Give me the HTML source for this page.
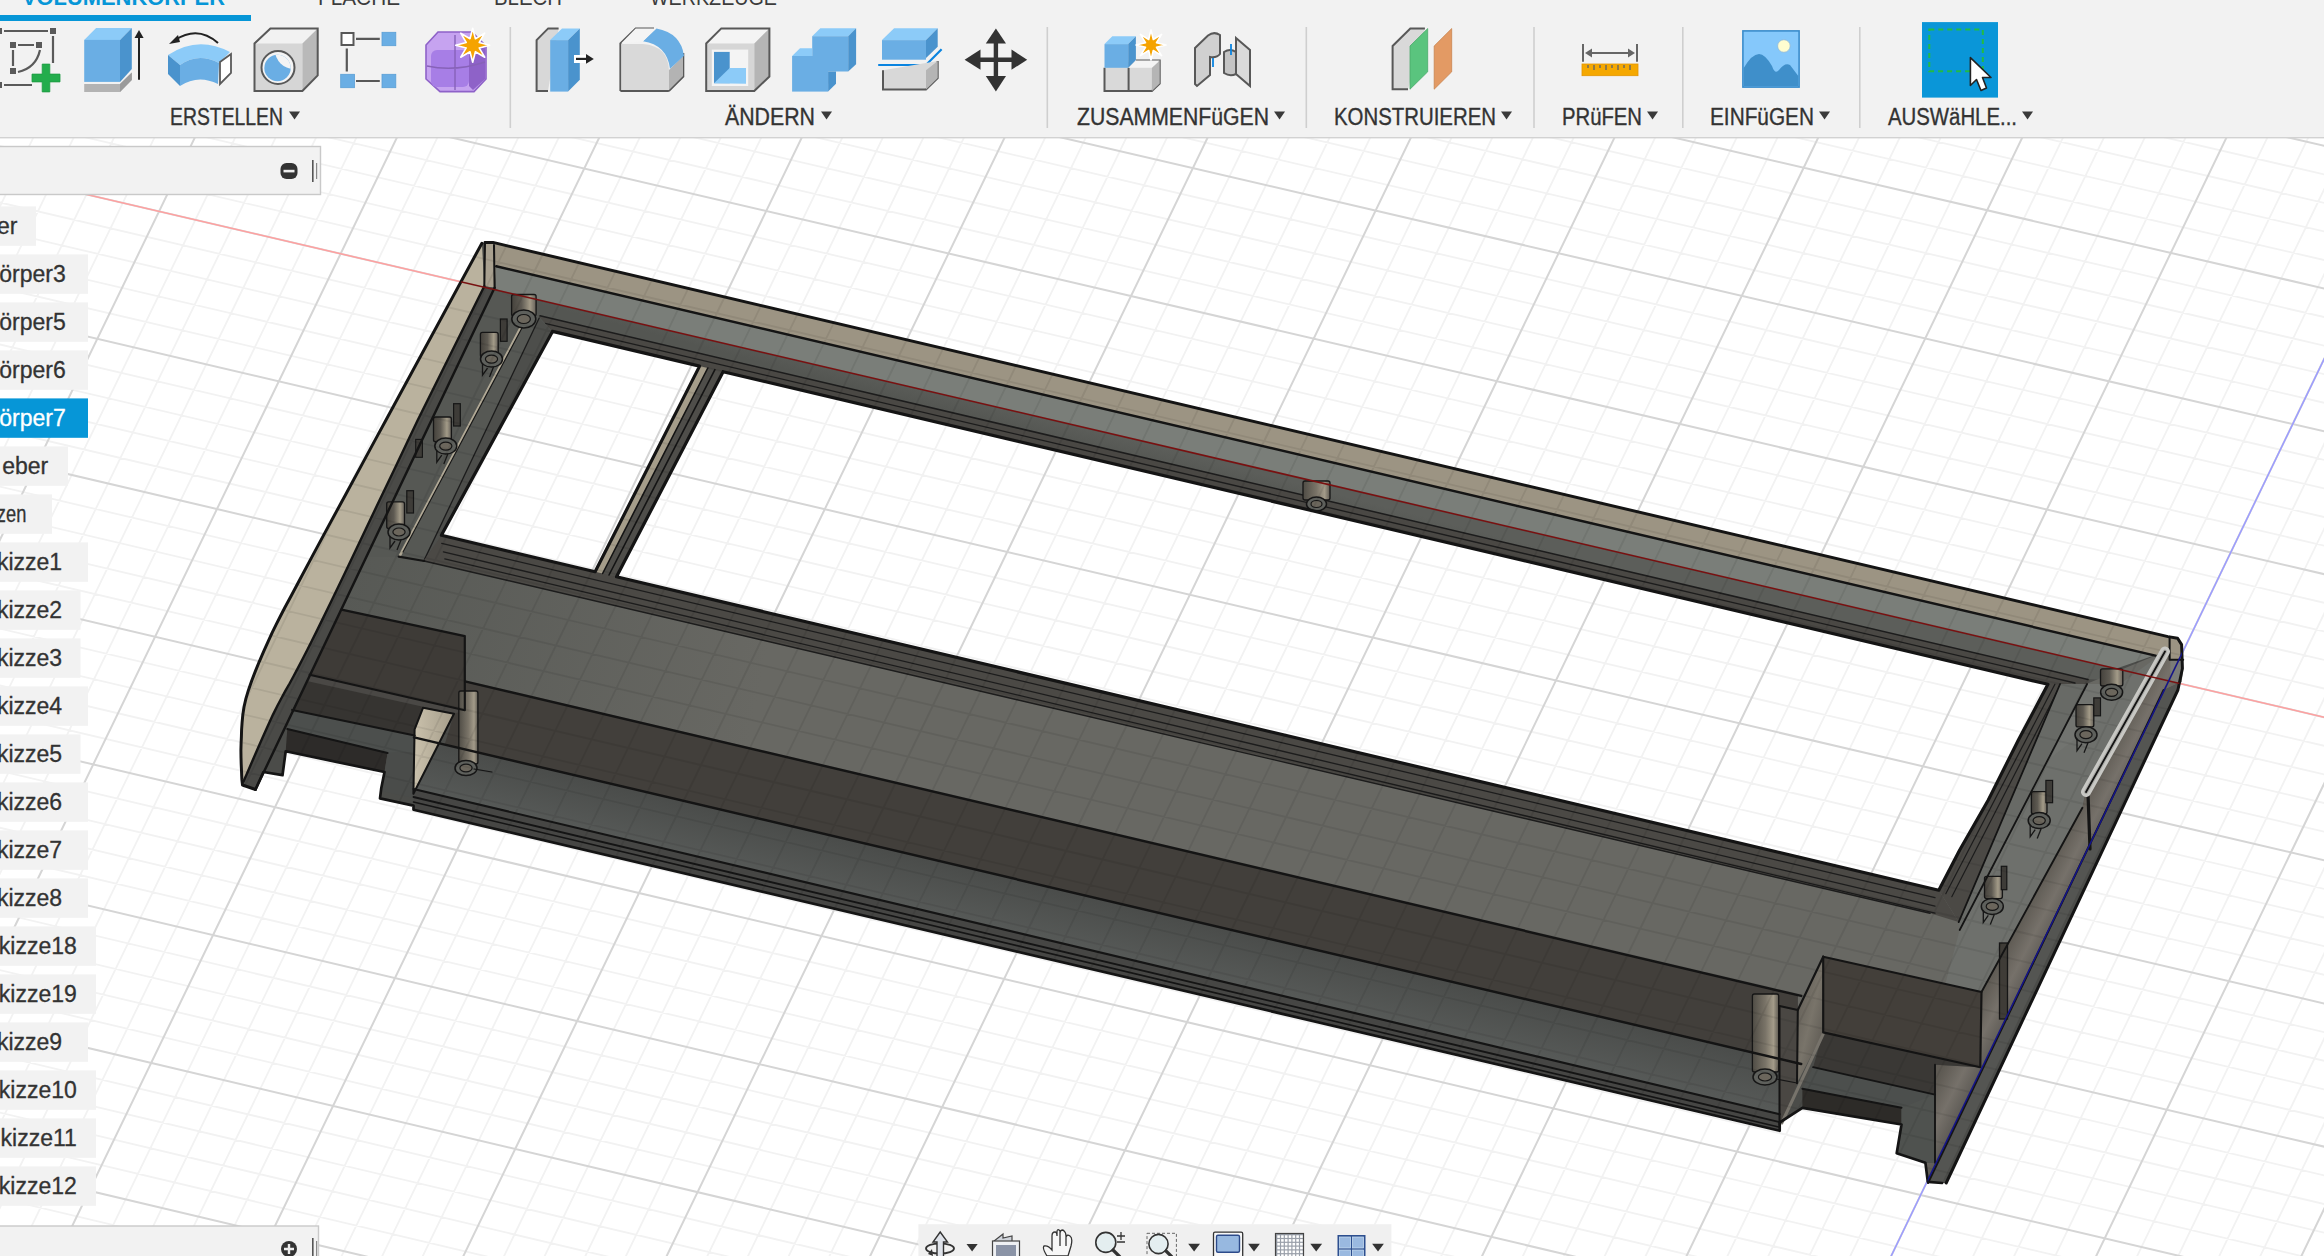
<!DOCTYPE html>
<html><head><meta charset="utf-8"><style>
html,body{margin:0;padding:0;width:2324px;height:1256px;overflow:hidden;background:#fff;font-family:"Liberation Sans",sans-serif;}
#vp{position:absolute;left:0;top:0;width:2324px;height:1256px;}
.abs{position:absolute;}
</style></head><body>
<svg id="vp" width="2324" height="1256" viewBox="0 0 2324 1256">
<defs>
<clipPath id="vpclip"><rect x="0" y="138" width="2324" height="1118"/></clipPath>

<linearGradient id="gCyl" x1="0" y1="0" x2="1" y2="0"><stop offset="0" stop-color="#45423c"/><stop offset="0.4" stop-color="#5e5a52"/><stop offset="0.75" stop-color="#a39b88"/><stop offset="1" stop-color="#66615a"/></linearGradient>
<linearGradient id="gCyl2" x1="0" y1="0" x2="1" y2="0"><stop offset="0" stop-color="#4f4c45"/><stop offset="0.5" stop-color="#7a7468"/><stop offset="0.8" stop-color="#a39b89"/><stop offset="1" stop-color="#5e5a52"/></linearGradient>
<linearGradient id="gLow" gradientUnits="userSpaceOnUse" x1="1000" y1="875.4" x2="987.6" y2="928.2"><stop offset="0" stop-color="#4a4c4a"/><stop offset="1" stop-color="#575a58"/></linearGradient>
<linearGradient id="gWall" gradientUnits="userSpaceOnUse" x1="1000" y1="405" x2="995" y2="424"><stop offset="0" stop-color="#5c5e5a"/><stop offset="1" stop-color="#545652"/></linearGradient>
<linearGradient id="gFrontL" gradientUnits="userSpaceOnUse" x1="340" y1="600" x2="760" y2="690"><stop offset="0" stop-color="#575955"/><stop offset="1" stop-color="#686863"/></linearGradient>
<linearGradient id="gFront" gradientUnits="userSpaceOnUse" x1="1000" y1="698" x2="975" y2="805"><stop offset="0" stop-color="#6b6b66"/><stop offset="1" stop-color="#676762"/></linearGradient>
<linearGradient id="gBrown" gradientUnits="userSpaceOnUse" x1="2040" y1="880" x2="2075" y2="898"><stop offset="0" stop-color="#5e5a53"/><stop offset="0.5" stop-color="#76716a"/><stop offset="1" stop-color="#5a5752"/></linearGradient>
<linearGradient id="gRwall" gradientUnits="userSpaceOnUse" x1="1790" y1="1000" x2="1830" y2="1010"><stop offset="0" stop-color="#5d5952"/><stop offset="0.6" stop-color="#79746a"/><stop offset="1" stop-color="#615d56"/></linearGradient>
<linearGradient id="gBeigeW" gradientUnits="userSpaceOnUse" x1="415" y1="740" x2="450" y2="740"><stop offset="0" stop-color="#c9c0ab"/><stop offset="1" stop-color="#a8a08d"/></linearGradient>

</defs>
<rect x="0" y="0" width="2324" height="1256" fill="#ffffff"/>
<g clip-path="url(#vpclip)">
<g id="grid"><path d="M-97 -839L-1208.5 1451.6M-60.8 -830.7L-1172.4 1460.2M-24.7 -822.4L-1136.4 1468.8M11.5 -814.1L-1100.3 1477.4M83.8 -797.4L-1028 1494.7M120 -789.1L-991.9 1503.3M156.2 -780.8L-955.8 1512M192.4 -772.4L-919.7 1520.6M264.9 -755.8L-847.3 1537.9M301.1 -747.4L-811.2 1546.6M337.4 -739.1L-775 1555.2M373.6 -730.7L-738.8 1563.9M446.1 -714L-666.4 1581.2M482.4 -705.7L-630.2 1589.8M518.7 -697.3L-594 1598.5M555 -689L-557.7 1607.2M627.6 -672.2L-485.3 1624.5M664 -663.9L-449 1633.2M700.3 -655.5L-412.7 1641.8M736.6 -647.2L-376.5 1650.5M809.4 -630.4L-303.9 1667.9M845.7 -622L-267.6 1676.5M882.1 -613.7L-231.3 1685.2M918.5 -605.3L-194.9 1693.9M991.3 -588.5L-122.3 1711.3M1027.7 -580.1L-85.9 1720M1064.2 -571.8L-49.5 1728.7M1100.6 -563.4L-13.2 1737.4M1173.5 -546.6L59.6 1754.8M1209.9 -538.2L96 1763.5M1246.4 -529.8L132.4 1772.2M1282.9 -521.4L168.8 1780.9M1355.9 -504.6L241.7 1798.3M1392.4 -496.2L278.1 1807M1428.9 -487.8L314.6 1815.7M1465.5 -479.4L351 1824.4M1538.5 -462.6L424 1841.9M1575.1 -454.1L460.5 1850.6M1611.7 -445.7L497 1859.3M1648.2 -437.3L533.5 1868.1M1721.4 -420.5L606.5 1885.5M1758 -412L643.1 1894.3M1794.6 -403.6L679.6 1903M1831.2 -395.2L716.2 1911.7M1904.5 -378.3L789.3 1929.2M1941.2 -369.9L825.9 1938M1977.8 -361.4L862.5 1946.7M2014.5 -353L899.1 1955.5M2087.9 -336.1L972.3 1973M2124.5 -327.7L1008.9 1981.7M2161.3 -319.2L1045.6 1990.5M2198 -310.8L1082.2 1999.3M2271.4 -293.9L1155.5 2016.8M2308.2 -285.4L1192.2 2025.6M2344.9 -276.9L1228.9 2034.3M2381.7 -268.5L1265.6 2043.1M2455.2 -251.5L1339 2060.7M2492 -243.1L1375.7 2069.4M2528.8 -234.6L1412.4 2078.2M2565.6 -226.1L1449.2 2087M2639.3 -209.2L1522.7 2104.6M2676.1 -200.7L1559.5 2113.4M2712.9 -192.2L1596.2 2122.2M2749.8 -183.7L1633 2131M2823.5 -166.8L1706.6 2148.6M2860.4 -158.3L1743.4 2157.4M2897.3 -149.8L1780.3 2166.2M2934.2 -141.3L1817.1 2175M3008 -124.3L1890.8 2192.6M3045 -115.8L1927.7 2201.4M3081.9 -107.3L1964.5 2210.2M3118.8 -98.8L2001.4 2219M3192.8 -81.8L2075.2 2236.7M3229.7 -73.2L2112.1 2245.5M3266.7 -64.7L2149 2254.3M3303.7 -56.2L2186 2263.2M3377.7 -39.2L2259.8 2280.8M3414.8 -30.7L2296.8 2289.7M3451.8 -22.1L2333.8 2298.5M3488.8 -13.6L2370.7 2307.3M-145.4 -822L3513.5 20.7M-157.8 -796.6L3501.1 46.4M-170.1 -771.2L3488.7 72.1M-182.4 -745.8L3476.3 97.9M-207.1 -695L3451.5 149.4M-219.4 -669.6L3439.1 175.1M-231.7 -644.2L3426.7 200.9M-244 -618.8L3414.3 226.6M-268.7 -567.9L3389.5 278.1M-281 -542.5L3377.1 303.9M-293.4 -517.1L3364.7 329.6M-305.7 -491.7L3352.3 355.4M-330.4 -440.9L3327.4 406.9M-342.7 -415.5L3315 432.7M-355 -390L3302.6 458.4M-367.4 -364.6L3290.2 484.2M-392 -313.8L3265.4 535.7M-404.4 -288.4L3253 561.5M-416.7 -262.9L3240.6 587.2M-429.1 -237.5L3228.2 613M-453.7 -186.7L3203.3 664.5M-466.1 -161.2L3190.9 690.3M-478.4 -135.8L3178.5 716.1M-490.8 -110.4L3166.1 741.8M-515.4 -59.5L3141.3 793.4M-527.8 -34.1L3128.8 819.2M-540.1 -8.7L3116.4 844.9M-552.5 16.8L3104 870.7M-577.2 67.6L3079.2 922.3M-589.5 93.1L3066.8 948.1M-601.8 118.5L3054.3 973.9M-614.2 144L3041.9 999.6M-638.9 194.8L3017.1 1051.2M-651.2 220.3L3004.7 1077M-663.6 245.7L2992.2 1102.8M-675.9 271.2L2979.8 1128.6M-700.6 322.1L2955 1180.2M-713 347.5L2942.5 1206M-725.3 373L2930.1 1231.7M-737.7 398.4L2917.7 1257.5M-762.4 449.3L2892.8 1309.1M-774.7 474.8L2880.4 1334.9M-787.1 500.2L2868 1360.7M-799.5 525.7L2855.5 1386.5M-824.2 576.6L2830.7 1438.1M-836.5 602.1L2818.3 1464M-848.9 627.5L2805.8 1489.8M-861.2 653L2793.4 1515.6M-886 703.9L2768.5 1567.2M-898.3 729.4L2756.1 1593M-910.7 754.9L2743.7 1618.8M-923 780.3L2731.2 1644.6M-947.8 831.3L2706.4 1696.3M-960.1 856.8L2693.9 1722.1M-972.5 882.2L2681.5 1747.9M-984.8 907.7L2669 1773.7M-1009.6 958.7L2644.2 1825.4M-1021.9 984.1L2631.7 1851.2M-1034.3 1009.6L2619.3 1877M-1046.7 1035.1L2606.8 1902.8M-1071.4 1086.1L2582 1954.5M-1083.8 1111.5L2569.5 1980.3M-1096.1 1137L2557.1 2006.1M-1108.5 1162.5L2544.6 2032M-1133.2 1213.5L2519.8 2083.6M-1145.6 1239L2507.3 2109.5M-1158 1264.5L2494.9 2135.3M-1170.3 1290L2482.4 2161.1M-1195.1 1341L2457.5 2212.8M-1207.5 1366.4L2445.1 2238.7M-1219.8 1391.9L2432.6 2264.5M-1232.2 1417.4L2420.2 2290.3" stroke="#f2f2f2" stroke-width="1.8" fill="none"/>
<path d="M-133.1 -847.4L-1244.6 1442.9M47.7 -805.8L-1064.2 1486.1M228.7 -764.1L-883.5 1529.3M409.9 -722.4L-702.6 1572.5M591.3 -680.6L-521.5 1615.8M773 -638.8L-340.2 1659.2M954.9 -596.9L-158.6 1702.6M1137 -555L23.2 1746.1M1319.4 -513L205.2 1789.6M1502 -471L387.5 1833.2M1684.8 -428.9L570 1876.8M1867.9 -386.7L752.7 1920.5M2051.2 -344.6L935.7 1964.2M2234.7 -302.3L1118.9 2008M2418.4 -260L1302.3 2051.9M2602.4 -217.7L1485.9 2095.8M2786.7 -175.2L1669.8 2139.8M2971.1 -132.8L1854 2183.8M3155.8 -90.3L2038.3 2227.9M3340.7 -47.7L2222.9 2272M3525.9 -5.1L2407.7 2316.2M-133.1 -847.4L3525.9 -5.1M-194.7 -720.4L3463.9 123.6M-256.4 -593.3L3401.9 252.4M-318 -466.3L3339.9 381.1M-379.7 -339.2L3277.8 509.9M-441.4 -212.1L3215.8 638.8M-503.1 -85L3153.7 767.6M-564.8 42.2L3091.6 896.5M-626.5 169.4L3029.5 1025.4M-688.3 296.6L2967.4 1154.4M-750 423.9L2905.3 1283.3M-811.8 551.2L2843.1 1412.3M-873.6 678.5L2781 1541.4M-935.4 805.8L2718.8 1670.4M-997.2 933.2L2656.6 1799.5M-1059 1060.6L2594.4 1928.6M-1120.9 1188L2532.2 2057.8M-1182.7 1315.5L2470 2187M-1244.6 1442.9L2407.7 2316.2" stroke="#d5d5d5" stroke-width="2" fill="none"/></g>
<path d="M-564.8 42.2L3091.6 896.5" stroke="#ffa0a0" stroke-width="1.5" fill="none"/><path d="M2602.4 -217.7L1485.9 2095.8" stroke="#9c9cff" stroke-width="1.5" fill="none"/>
<polygon points="485,242.4 493,242.4 2168,636.6 2177.6,638.2 2181.6,644.6 2182.4,668.5 2177.9,690 1946.2,1183 1942.1,1183 1927.8,1181.8 1925.4,1162.7 1896.7,1153.2 1901.5,1124.5 1802.4,1107.8 1779.7,1122.5 1779.7,1130.8 413.5,809.7 413.5,805.6 380,798.4 381.3,787.9 384.5,772 285.7,751.3 282.5,775.2 263.4,772 255.5,789.5 242.5,785 241.9,779.9 241.7,776 241.5,770.7 241.2,764.4 241,757.4 240.9,750.3 241.1,743.3 241.4,736.5 241.6,729.5 242.1,722.3 242.8,714.8 244,707 245.9,698.7 248.5,689.9 251.7,680.7 255.4,671.1 259.4,661.3 263.7,651.4 268.2,641.4 272.3,632.4 276.1,624.6 280.1,616.7 285,607.3 291.5,595.2 300,579.2 312.2,556.4 327.8,527.4 345,495.7 361.7,464.9 376,438.4 386,420 481.9,243.2" fill="#4b4c49" />
<clipPath id="silclip"><polygon points="485,242.4 493,242.4 2168,636.6 2177.6,638.2 2181.6,644.6 2182.4,668.5 2177.9,690 1946.2,1183 1942.1,1183 1927.8,1181.8 1925.4,1162.7 1896.7,1153.2 1901.5,1124.5 1802.4,1107.8 1779.7,1122.5 1779.7,1130.8 413.5,809.7 413.5,805.6 380,798.4 381.3,787.9 384.5,772 285.7,751.3 282.5,775.2 263.4,772 255.5,789.5 242.5,785 241.9,779.9 241.7,776 241.5,770.7 241.2,764.4 241,757.4 240.9,750.3 241.1,743.3 241.4,736.5 241.6,729.5 242.1,722.3 242.8,714.8 244,707 245.9,698.7 248.5,689.9 251.7,680.7 255.4,671.1 259.4,661.3 263.7,651.4 268.2,641.4 272.3,632.4 276.1,624.6 280.1,616.7 285,607.3 291.5,595.2 300,579.2 312.2,556.4 327.8,527.4 345,495.7 361.7,464.9 376,438.4 386,420 481.9,243.2"/></clipPath>
<polygon points="493,242.4 2168,636.6 2177.6,638.2 2181.6,644.6 2163,652 2155.4,655.6 496.2,266.2 485.9,265.5 485,242.4" fill="#9c9483" />
<polygon points="485,242.4 493,242.4 496.2,267 494.6,287.8 484.3,286.2" fill="#a8a08f" />
<polygon points="495.5,266 2155.4,655.6 2164.8,651.8 2086.3,679.1 538.5,315.4 495.5,289" fill="#7a7e79" />
<polygon points="495.5,289.9 2180,683.5 2086.3,679.1 538.5,315.4 495.5,289" fill="url(#gWall)" />
<polygon points="537.6,315.2 2090,680 2082.7,692.5 2047.9,684.3 552.5,331.4" fill="#4a4844" />
<polyline points="540,315.8 2088,679.5" fill="none" stroke="#1c1c1c" stroke-width="1.5" stroke-linejoin="round" stroke-linecap="round" />
<polyline points="545,323.4 2075,683" fill="none" stroke="#1c1c1c" stroke-width="1.3" stroke-linejoin="round" stroke-linecap="round" />
<polygon points="481.9,243.2 386,420 376,438.4 361.7,464.9 345,495.7 327.8,527.4 312.2,556.4 300,579.2 291.5,595.2 285,607.3 280.1,616.7 276.1,624.6 272.3,632.4 268.2,641.4 263.7,651.4 259.4,661.3 255.4,671.1 251.7,680.7 248.5,689.9 245.9,698.7 244,707 242.8,714.8 242.1,722.3 241.6,729.5 241.4,736.5 241.1,743.3 240.9,750.3 241,757.4 241.2,764.4 241.5,770.7 241.7,776 241.9,779.9 242.5,785 243.5,781.5 246.8,774 251.3,763.4 256.7,751 262.4,738 268,725.4 273,714.6 277.4,705.8 281.5,698 285.5,690.7 289.6,683.5 293.8,675.7 298.5,666.9 303,658.2 307.1,650.2 311.4,641.7 316.6,631.4 323.2,617.9 331.9,600 344.2,574.5 359.8,541.7 376.9,505.8 393.6,470.9 407.8,440.9 417.8,420 484.3,286.2" fill="#bab29e" />
<polygon points="484.3,286.2 417.8,420 407.8,440.9 393.6,470.9 376.9,505.8 359.8,541.7 344.2,574.5 331.9,600 323.2,617.9 316.6,631.4 311.4,641.7 307.1,650.2 303,658.2 298.5,666.9 293.8,675.7 289.6,683.5 285.5,690.7 281.5,698 277.4,705.8 273,714.6 268,725.4 262.4,738 256.7,751 251.3,763.4 246.8,774 243.5,781.5 255.5,789.5 494.6,287.8" fill="#4a4a47" />
<polygon points="494.6,287.8 537.6,315.2 552.5,331.4 441.4,535.3 424.2,560.1 398.7,556.9 366.3,556.9" fill="#565854" />
<polygon points="539.2,318 552.5,331.4 441.4,535.3 424.2,560.1" fill="#4d4e4b" />
<polyline points="539.2,318 424.2,560.1" fill="none" stroke="#1c1c1c" stroke-width="1.3" stroke-linejoin="round" stroke-linecap="round" />
<polygon points="366.3,556.9 398.7,556.9 424.2,560.1 430,562.3 1926.9,912.6 2060.1,684 2086.3,684 2164.8,651.8 2085.5,791.9 2082.4,807.8 2037.8,890 1981.5,992 1823.2,956.7 1797.8,1010 1797.8,995.1 466,681.6 464.8,636.1 341.5,609.6" fill="url(#gFrontL)" />
<polygon points="2087.1,684 2120,684 2164.8,651.8 2085.5,791.9 2082.4,807.8 2037.8,890 1981.5,992 1945,985 1959.7,930" fill="#6e706c" />
<polygon points="2087.1,684 2100,684 2100,720 2047.7,760" fill="#727470" />
<polygon points="441.4,535.3 1938.8,890.2 1958.7,922.1 1930,913.3 423,560.7 424.2,560.1" fill="#4b4945" />
<polyline points="441.7,543.4 1935,897.7" fill="none" stroke="#1c1c1c" stroke-width="1.3" stroke-linejoin="round" stroke-linecap="round" />
<polyline points="443.4,551.9 1935,906.2" fill="none" stroke="#1c1c1c" stroke-width="1.3" stroke-linejoin="round" stroke-linecap="round" />
<polyline points="444.8,558.9 1935,913.2" fill="none" stroke="#1c1c1c" stroke-width="1.3" stroke-linejoin="round" stroke-linecap="round" />
<polyline points="423,560.7 1930,913.3" fill="none" stroke="#1c1c1c" stroke-width="1.4" stroke-linejoin="round" stroke-linecap="round" />
<polygon points="699.6,366.1 723.1,371.7 616.5,576.8 595.1,571.7" fill="#4f4e4a" />
<polygon points="699.6,366.1 707.8,368 602.6,573.5 595.1,571.7" fill="#a59d8a" />
<polyline points="707.8,368 602.6,573.5" fill="none" stroke="#141414" stroke-width="1.6" stroke-linejoin="round" stroke-linecap="round" />
<polyline points="714.9,369.7 609,575" fill="none" stroke="#141414" stroke-width="1.6" stroke-linejoin="round" stroke-linecap="round" />
<polygon points="2047.9,684.3 2060.1,684 1958.7,922.1 1938.8,890.2" fill="#4b4945" />
<polyline points="2054.9,684.3 1945.8,893.7" fill="none" stroke="#1c1c1c" stroke-width="1.2" stroke-linejoin="round" stroke-linecap="round" />
<polyline points="2060.9,684.3 1951.8,896.7" fill="none" stroke="#1c1c1c" stroke-width="1.2" stroke-linejoin="round" stroke-linecap="round" />
<polygon points="2060.1,684 2087.1,684 1959.7,930 1958.7,922.1" fill="#686a66" />
<polygon points="2164.8,651.8 2166,648 2170.4,659.8 2181.6,682 2163.6,690 1928,1183 1927.8,1181.8 1925.4,1162.7 1935,1162.7 1935,1064.8 1980.3,1067.2 1981.5,992 2037.8,890 2082.4,807.8 2085.5,791.9" fill="url(#gBrown)" />
<polygon points="2181.6,682 2180,683.7 2079.2,890 1942.1,1183 1928,1183 2163.6,690" fill="#545552" />
<polygon points="2169.6,638 2177.6,638.7 2181.6,643.1 2181.6,659.8 2170.4,659.8" fill="#9c9483" />
<polygon points="2170.4,659.8 2183.2,659.8 2183.2,669.4 2181.6,682 2170.4,682" fill="#7a7c78" />
<polygon points="341.5,609.6 464.8,636.1 464.8,710.2 309.6,674.8" fill="#3e3b37" />
<polygon points="309.6,674.8 464.8,710.2 464.8,716 308,681.2" fill="#4a4845" />
<polygon points="308,681.2 464.8,716 454,713.8 423,707.8 414.7,735.4 292.1,709.9" fill="#363431" />
<polygon points="292.1,709.9 414.7,735.4 413.1,752 387.6,752.9 287.3,729" fill="#4c4f4d" />
<polygon points="287.3,729 387.6,752.9 384.5,772 285.7,751.3" fill="#2d2b29" />
<polygon points="387.6,752.9 413.1,752 413.5,798 381.3,791 384.5,772" fill="#4a4c4a" />
<polygon points="466,681.6 1797.8,995.1 1797.8,1063.2 466,749.7" fill="#423f3b" />
<polygon points="464.8,710.2 466,681.6 466,749.7 440,760 454,713.8" fill="#3f3c38" />
<polygon points="430,741.2 1797,1063 1779.7,1114.2 413.5,789" fill="url(#gLow)" />
<polygon points="423,707.8 454,713.8 413.4,793.8 414.6,729.3" fill="url(#gBeigeW)" />
<polygon points="413.5,789 1779.7,1114.2 1779.7,1130.8 413.5,809.7" fill="#464644" />
<polygon points="1823.2,956.7 1981.5,992 1980.3,1067.2 1823.2,1032.4" fill="#433f3a" />
<polygon points="1797.8,1010 1823.2,956.7 1823.2,1032.4 1797,1083.3" fill="url(#gRwall)" />
<polygon points="1779.5,1006 1797.8,1010 1797,1083.3 1781.8,1123 1779.5,1124.7" fill="#4a4743" />
<polygon points="1823.2,1032.4 1980.3,1067.2 1935,1064.8 1935,1094.6 1813.1,1067.2" fill="#3a3835" />
<polygon points="1813.1,1067.2 1935,1094.6 1935,1120 1901.5,1107.8 1802.4,1088.7" fill="#4c4f4d" />
<polygon points="1802.4,1088.7 1901.5,1107.8 1901.5,1124.5 1802.4,1107.8" fill="#2d2b28" />
<polygon points="1901.5,1107.8 1935,1094.6 1935,1162.7 1925.4,1162.7 1896.7,1153.2 1901.5,1124.5" fill="#4f524f" />
<polyline points="1823.2,1034 1781.8,1123" fill="none" stroke="#77736b" stroke-width="3" stroke-linejoin="round" stroke-linecap="round" />
<polyline points="520.5,327.9 400,555.4" fill="none" stroke="#b1a996" stroke-width="2.4" stroke-linejoin="round" stroke-linecap="round" />
<polyline points="523,326 403,552" fill="none" stroke="#161616" stroke-width="1.1" stroke-linejoin="round" stroke-linecap="round" />
<rect x="511.6" y="294.5" width="24.5" height="21.5" rx="2" fill="url(#gCyl)" stroke="#161616" stroke-width="1.3"/>
<ellipse cx="523.8" cy="319" rx="12" ry="9" fill="#5e605c" stroke="#161616" stroke-width="1.5"/><ellipse cx="523.8" cy="319" rx="6.6" ry="4.5" fill="#6b665c" stroke="#161616" stroke-width="1.2"/>
<rect x="480.4" y="332.4" width="17.8" height="24.5" rx="2" fill="url(#gCyl)" stroke="#161616" stroke-width="1.3"/><rect x="500.4" y="319" width="6.7" height="22.3" fill="#3e3c38" stroke="#161616" stroke-width="1.2"/><path d="M482.5 361.1L482.5 375.1L487.5 368.1" fill="none" stroke="#161616" stroke-width="1.3"/><path d="M493.5 367.1L489.5 377.1" fill="none" stroke="#161616" stroke-width="1.3"/><ellipse cx="491.5" cy="359.1" rx="11" ry="8" fill="#5e605c" stroke="#161616" stroke-width="1.5"/><ellipse cx="491.5" cy="359.1" rx="6.1" ry="4" fill="#6b665c" stroke="#161616" stroke-width="1.2"/>
<rect x="433.5" y="417" width="17.9" height="24.7" rx="2" fill="url(#gCyl)" stroke="#161616" stroke-width="1.3"/><rect x="453.6" y="403.7" width="6.7" height="22.3" fill="#3e3c38" stroke="#161616" stroke-width="1.2"/><path d="M436.8 448.1L436.8 462.1L441.8 455.1" fill="none" stroke="#161616" stroke-width="1.3"/><path d="M447.8 454.1L443.8 464.1" fill="none" stroke="#161616" stroke-width="1.3"/><ellipse cx="445.8" cy="446.1" rx="11" ry="8" fill="#5e605c" stroke="#161616" stroke-width="1.5"/><ellipse cx="445.8" cy="446.1" rx="6.1" ry="4" fill="#6b665c" stroke="#161616" stroke-width="1.2"/>
<rect x="386.7" y="501.9" width="17.8" height="26.7" rx="2" fill="url(#gCyl)" stroke="#161616" stroke-width="1.3"/><rect x="406.8" y="490.7" width="6.7" height="22.3" fill="#3e3c38" stroke="#161616" stroke-width="1.2"/><path d="M390 534L390 548L395 541" fill="none" stroke="#161616" stroke-width="1.3"/><path d="M401 540L397 550" fill="none" stroke="#161616" stroke-width="1.3"/><ellipse cx="399" cy="532" rx="11" ry="8" fill="#5e605c" stroke="#161616" stroke-width="1.5"/><ellipse cx="399" cy="532" rx="6.1" ry="4" fill="#6b665c" stroke="#161616" stroke-width="1.2"/>
<rect x="415.7" y="439.4" width="6.7" height="17.9" fill="#3e3c38" stroke="#161616" stroke-width="1.1"/>
<rect x="2100.5" y="668.9" width="22.3" height="17.1" rx="2" fill="url(#gCyl)" stroke="#161616" stroke-width="1.3"/>
<ellipse cx="2111.6" cy="692.3" rx="11" ry="8" fill="#5e605c" stroke="#161616" stroke-width="1.5"/><ellipse cx="2111.6" cy="692.3" rx="6.1" ry="4" fill="#6b665c" stroke="#161616" stroke-width="1.2"/>
<rect x="2076" y="704.6" width="17.8" height="22.3" rx="2" fill="url(#gCyl)" stroke="#161616" stroke-width="1.3"/><rect x="2093.8" y="697.9" width="6.7" height="17.9" fill="#3e3c38" stroke="#161616" stroke-width="1.2"/><path d="M2077 736.7L2077 750.7L2082 743.7" fill="none" stroke="#161616" stroke-width="1.3"/><path d="M2088 742.7L2084 752.7" fill="none" stroke="#161616" stroke-width="1.3"/><ellipse cx="2086" cy="734.7" rx="11" ry="8" fill="#5e605c" stroke="#161616" stroke-width="1.5"/><ellipse cx="2086" cy="734.7" rx="6.1" ry="4" fill="#6b665c" stroke="#161616" stroke-width="1.2"/>
<rect x="2031.4" y="791.6" width="15.6" height="22.3" rx="2" fill="url(#gCyl)" stroke="#161616" stroke-width="1.3"/><rect x="2045.9" y="780.4" width="6.7" height="22.3" fill="#3e3c38" stroke="#161616" stroke-width="1.2"/><path d="M2030.2 822.6L2030.2 836.6L2035.2 829.6" fill="none" stroke="#161616" stroke-width="1.3"/><path d="M2041.2 828.6L2037.2 838.6" fill="none" stroke="#161616" stroke-width="1.3"/><ellipse cx="2039.2" cy="820.6" rx="11" ry="8" fill="#5e605c" stroke="#161616" stroke-width="1.5"/><ellipse cx="2039.2" cy="820.6" rx="6.1" ry="4" fill="#6b665c" stroke="#161616" stroke-width="1.2"/>
<rect x="1984.5" y="876.3" width="17.9" height="22.3" rx="2" fill="url(#gCyl)" stroke="#161616" stroke-width="1.3"/><rect x="2001.3" y="866.3" width="5.5" height="23.4" fill="#3e3c38" stroke="#161616" stroke-width="1.2"/><path d="M1983.3 908.4L1983.3 922.4L1988.3 915.4" fill="none" stroke="#161616" stroke-width="1.3"/><path d="M1994.3 914.4L1990.3 924.4" fill="none" stroke="#161616" stroke-width="1.3"/><ellipse cx="1992.3" cy="906.4" rx="11" ry="8" fill="#5e605c" stroke="#161616" stroke-width="1.5"/><ellipse cx="1992.3" cy="906.4" rx="6.1" ry="4" fill="#6b665c" stroke="#161616" stroke-width="1.2"/>
<rect x="1303" y="481" width="27" height="19" rx="2" fill="url(#gCyl2)" stroke="#161616" stroke-width="1.3"/>
<ellipse cx="1316.5" cy="504" rx="10" ry="7" fill="#5e605c" stroke="#161616" stroke-width="1.5"/><ellipse cx="1316.5" cy="504" rx="5.5" ry="3.5" fill="#6b665c" stroke="#161616" stroke-width="1.2"/>
<rect x="458.8" y="691" width="19.1" height="73" rx="2" fill="url(#gCyl2)" stroke="#161616" stroke-width="1.3"/>
<ellipse cx="466" cy="768" rx="11" ry="7.5" fill="#5e605c" stroke="#161616" stroke-width="1.5"/><ellipse cx="466" cy="768" rx="6.1" ry="3.8" fill="#6b665c" stroke="#161616" stroke-width="1.2"/>
<polyline points="474,769 492,772" fill="none" stroke="#161616" stroke-width="1.2" stroke-linejoin="round" stroke-linecap="round" />
<rect x="1752.4" y="994" width="26.3" height="78" rx="2" fill="url(#gCyl2)" stroke="#161616" stroke-width="1.3"/>
<ellipse cx="1765" cy="1077" rx="12" ry="8" fill="#5e605c" stroke="#161616" stroke-width="1.5"/><ellipse cx="1765" cy="1077" rx="6.6" ry="4" fill="#6b665c" stroke="#161616" stroke-width="1.2"/>
<polyline points="1776,1079 1797,1083" fill="none" stroke="#161616" stroke-width="1.2" stroke-linejoin="round" stroke-linecap="round" />
<rect x="1999.5" y="943" width="8" height="76" fill="#3f3c37" stroke="#161616" stroke-width="1.3"/>
<g clip-path="url(#silclip)" opacity="0.07"><use href="#grid" style="filter:brightness(0)"/></g>
<clipPath id="winclip"><polygon points="552.5,331.4 699.6,366.1 595.1,571.7 441.4,535.3"/><polygon points="723.1,371.7 2047.9,684.3 2018.4,740 1988.3,800 1959.7,850 1938.8,890.2 616.5,576.8"/></clipPath>
<g id="wingroup" clip-path="url(#winclip)"><rect x="0" y="138" width="2324" height="1118" fill="#fff"/><use href="#grid"/></g>
<polyline points="481.9,243.2 386,420 376,438.4 361.7,464.9 345,495.7 327.8,527.4 312.2,556.4 300,579.2 291.5,595.2 285,607.3 280.1,616.7 276.1,624.6 272.3,632.4 268.2,641.4 263.7,651.4 259.4,661.3 255.4,671.1 251.7,680.7 248.5,689.9 245.9,698.7 244,707 242.8,714.8 242.1,722.3 241.6,729.5 241.4,736.5 241.1,743.3 240.9,750.3 241,757.4 241.2,764.4 241.5,770.7 241.7,776 241.9,779.9 242.5,785 255.5,789.5" fill="none" stroke="#141414" stroke-width="2.97" stroke-linejoin="round" stroke-linecap="round" />
<polyline points="485,242.4 493,242.4 2168,636.6 2177.6,638.2 2181.6,644.6 2182.4,668.5 2177.9,690 1946.2,1183" fill="none" stroke="#141414" stroke-width="2.97" stroke-linejoin="round" stroke-linecap="round" />
<polyline points="1942.1,1183 1927.8,1181.8 1925.4,1162.7 1896.7,1153.2 1901.5,1124.5 1802.4,1107.8 1779.7,1122.5 1779.7,1130.8 413.5,809.7 413.5,805.6 380,798.4 381.3,787.9 384.5,772 285.7,751.3 282.5,775.2 263.4,772 255.5,789.5" fill="none" stroke="#141414" stroke-width="2.7" stroke-linejoin="round" stroke-linecap="round" />
<polyline points="496.2,266.2 2155.4,655.6" fill="none" stroke="#141414" stroke-width="2.43" stroke-linejoin="round" stroke-linecap="round" />
<polyline points="552.5,331.4 699.6,366.1 595.1,571.7 441.4,535.3 552.5,331.4" fill="none" stroke="#141414" stroke-width="3.2" stroke-linejoin="round" stroke-linecap="round" />
<polyline points="723.1,371.7 2047.9,684.3 2018.4,740 1988.3,800 1959.7,850 1938.8,890.2 616.5,576.8 723.1,371.7" fill="none" stroke="#141414" stroke-width="3.2" stroke-linejoin="round" stroke-linecap="round" />
<polyline points="484.3,286.2 417.8,420 407.8,440.9 393.6,470.9 376.9,505.8 359.8,541.7 344.2,574.5 331.9,600 323.2,617.9 316.6,631.4 311.4,641.7 307.1,650.2 303,658.2 298.5,666.9 293.8,675.7 289.6,683.5 285.5,690.7 281.5,698 277.4,705.8 273,714.6 268,725.4 262.4,738 256.7,751 251.3,763.4 246.8,774 243.5,781.5" fill="none" stroke="#141414" stroke-width="2.43" stroke-linejoin="round" stroke-linecap="round" />
<polyline points="494.6,287.8 255.5,789.5" fill="none" stroke="#141414" stroke-width="2.43" stroke-linejoin="round" stroke-linecap="round" />
<polyline points="485,242.4 484.3,286.2" fill="none" stroke="#141414" stroke-width="2.03" stroke-linejoin="round" stroke-linecap="round" />
<polyline points="494,245 494.6,287.8" fill="none" stroke="#141414" stroke-width="2.03" stroke-linejoin="round" stroke-linecap="round" />
<polyline points="398.7,556.6 424.2,561" fill="none" stroke="#141414" stroke-width="2.2" stroke-linejoin="round" stroke-linecap="round" />
<polyline points="341.5,609.6 464.8,636.1 464.8,710.2 309.6,674.8" fill="none" stroke="#141414" stroke-width="2.16" stroke-linejoin="round" stroke-linecap="round" />
<polyline points="292.1,709.9 414.7,735.4" fill="none" stroke="#141414" stroke-width="2.03" stroke-linejoin="round" stroke-linecap="round" />
<polyline points="287.3,729 387.6,752.9" fill="none" stroke="#141414" stroke-width="2.03" stroke-linejoin="round" stroke-linecap="round" />
<polyline points="423,707.8 454,713.8 413.4,793.8 414.6,729.3 423,707.8" fill="none" stroke="#141414" stroke-width="2.03" stroke-linejoin="round" stroke-linecap="round" />
<polyline points="466,681.6 1801.2,995.9" fill="none" stroke="#141414" stroke-width="2.43" stroke-linejoin="round" stroke-linecap="round" />
<polyline points="414,737.4 1801.2,1064" fill="none" stroke="#141414" stroke-width="2.43" stroke-linejoin="round" stroke-linecap="round" />
<polyline points="413.5,789 1779.7,1114.2" fill="none" stroke="#141414" stroke-width="2.16" stroke-linejoin="round" stroke-linecap="round" />
<polyline points="413.5,797 1779.7,1122.2" fill="none" stroke="#141414" stroke-width="1.89" stroke-linejoin="round" stroke-linecap="round" />
<polyline points="413.5,802 1779.7,1127.2" fill="none" stroke="#141414" stroke-width="1.6" stroke-linejoin="round" stroke-linecap="round" />
<polyline points="1823.2,956.7 1981.5,992 1980.3,1067.2 1823.2,1032.4 1823.2,956.7" fill="none" stroke="#141414" stroke-width="2.16" stroke-linejoin="round" stroke-linecap="round" />
<polyline points="1797.8,1010 1823.2,956.7" fill="none" stroke="#141414" stroke-width="2.16" stroke-linejoin="round" stroke-linecap="round" />
<polyline points="1779.5,1006 1797.8,1010 1797,1083.3" fill="none" stroke="#141414" stroke-width="2.03" stroke-linejoin="round" stroke-linecap="round" />
<polyline points="1779.5,1006 1779.5,1124.7" fill="none" stroke="#141414" stroke-width="2.03" stroke-linejoin="round" stroke-linecap="round" />
<polyline points="1813.1,1067.2 1935,1094.6" fill="none" stroke="#141414" stroke-width="1.89" stroke-linejoin="round" stroke-linecap="round" />
<polyline points="1802.4,1088.7 1901.5,1107.8" fill="none" stroke="#141414" stroke-width="1.89" stroke-linejoin="round" stroke-linecap="round" />
<polyline points="1935,1064.8 1935,1162.7" fill="none" stroke="#141414" stroke-width="1.89" stroke-linejoin="round" stroke-linecap="round" />
<polyline points="2163.6,690 1928,1183" fill="none" stroke="#141414" stroke-width="2.03" stroke-linejoin="round" stroke-linecap="round" />
<polyline points="2082.4,807.8 1981.5,992" fill="none" stroke="#141414" stroke-width="1.89" stroke-linejoin="round" stroke-linecap="round" />
<polyline points="2087.1,684 1959.7,930" fill="none" stroke="#141414" stroke-width="1.76" stroke-linejoin="round" stroke-linecap="round" />
<polyline points="2060.1,684 1958.7,922.1" fill="none" stroke="#141414" stroke-width="1.76" stroke-linejoin="round" stroke-linecap="round" />
<polyline points="2169.6,636.7 2169.6,659.8 2183.2,659.8" fill="none" stroke="#141414" stroke-width="2.03" stroke-linejoin="round" stroke-linecap="round" />
<polyline points="2088,794 2090,849" fill="none" stroke="#141414" stroke-width="3.2" stroke-linejoin="round" stroke-linecap="round" />
<path d="M2165 651.5L2086 792" stroke="#c8c8c4" stroke-width="10" stroke-linecap="round" fill="none"/>
<path d="M2165 651.5L2086 792" stroke="#a8a8a4" stroke-width="4" stroke-linecap="round" fill="none"/>
<polyline points="2165,651.5 2086,792" fill="none" stroke="#141414" stroke-width="1.8" stroke-linejoin="round" stroke-linecap="round" />
<g clip-path="url(#silclip)"><path d="M-564.8 42.2L3091.6 896.5" stroke="#7a1010" stroke-width="1.5" fill="none"/><path d="M2602.4 -217.7L1485.9 2095.8" stroke="#14148a" stroke-width="1.5" fill="none"/></g>
</g>
<rect x="0" y="0" width="2324" height="137" fill="#f2f2f2"/>
<rect x="0" y="137" width="2324" height="1.4" fill="#d2d2d2"/>
<g font-family="Liberation Sans, sans-serif" font-size="22"><text x="22" y="4.5" fill="#0696d7" font-weight="bold" textLength="203" lengthAdjust="spacingAndGlyphs">VOLUMENKÖRPER</text><text x="318" y="4.5" fill="#3c3c3c" textLength="82" lengthAdjust="spacingAndGlyphs">FLÄCHE</text><text x="494" y="4.5" fill="#3c3c3c" textLength="68" lengthAdjust="spacingAndGlyphs">BLECH</text><text x="650" y="4.5" fill="#3c3c3c" textLength="127" lengthAdjust="spacingAndGlyphs">WERKZEUGE</text></g>
<rect x="0" y="15" width="251" height="6" fill="#0696d7"/>
<g fill="none" stroke="#5a5a5a" stroke-width="2.2"><path d="M4 31H48M53 36V63M4 85H32"/><path d="M18 45H34M13 50V66M40 50Q36 68 18 72"/></g>
<g fill="#5a5a5a"><rect x="50" y="28" width="6" height="6"/><rect x="0" y="28" width="2" height="6"/><rect x="0" y="82" width="2" height="6"/><rect x="10" y="42" width="6" height="6"/><rect x="36" y="42" width="6" height="6"/><rect x="10" y="68" width="6" height="6"/></g>
<path d="M42.2 64.1H49.8V74.1H60V81.9H49.8V91.9H42.2V81.9H32V74.1H42.2Z" fill="#23ad4c" stroke="#1d9a42" stroke-width="0.8"/>
<polygon points="84.2,84 120,84 131.8,72.5 131.8,80 120,91.9 84.2,91.9" fill="#b3b3b3"/><polygon points="120,84 131.8,72.5 131.8,80 120,91.9" fill="#9a9a9a"/>
<polygon points="84.2,39.9 96.1,28.1 131.8,28.1 120,39.9" fill="#8ccbf8"/><rect x="84.2" y="39.9" width="35.8" height="42" fill="#6aaee4"/><polygon points="120,39.9 131.8,28.1 131.8,68.9 120,81.9" fill="#4a93cd"/>
<path d="M139 79.7V36" stroke="#222" stroke-width="2"/><polygon points="134.5,38 139,29.9 143.6,38" fill="#222"/>
<path d="M168 55Q198 35 230 52L219 63Q198 52 180 65Z" fill="#8ccbf8"/>
<path d="M180 65Q198 52 219 63L218 84Q198 74 180 86Z" fill="#6aaee4"/><path d="M168 55L180 65L180 86L168 74Z" fill="#4a93cd"/>
<path d="M220 62L231 54V73L220 84Z" fill="#fff" stroke="#5a5a5a" stroke-width="1.8"/>
<path d="M218 43Q198 25 175 40" fill="none" stroke="#222" stroke-width="2"/><polygon points="169,44 178,35 180,42" fill="#222"/>
<polygon points="254.5,43.5 270.4,28.4 317.7,28.4 302.4,43.5" fill="#f2f2f2"/><rect x="254.5" y="43.5" width="47.9" height="47.5" fill="#d6d6d6"/><polygon points="302.4,43.5 317.7,28.4 317.7,75.4 302.4,91" fill="#b9b9b9"/>
<path d="M254.5 91V43.5L270.4 28.4H317.7V75.4L302.4 91Z" fill="none" stroke="#585858" stroke-width="2"/>
<clipPath id="holeclip"><circle cx="277.5" cy="68" r="13.2"/></clipPath><circle cx="278" cy="67.5" r="16.5" fill="#f4f4f4" stroke="#585858" stroke-width="2"/><circle cx="277.5" cy="68" r="13.2" fill="#6aaee4"/><circle cx="294" cy="50" r="19" fill="#f4f4f4" clip-path="url(#holeclip)"/>
<rect x="341.5" y="33" width="12" height="12" fill="#fff" stroke="#585858" stroke-width="2"/>
<rect x="382" y="32.3" width="13.8" height="13.4" fill="#6aaee4" stroke="#5a9fd6" stroke-width="0.8"/>
<rect x="340.7" y="74.3" width="13.8" height="13.4" fill="#6aaee4" stroke="#5a9fd6" stroke-width="0.8"/>
<rect x="382" y="74.3" width="13.8" height="13.4" fill="#6aaee4" stroke="#5a9fd6" stroke-width="0.8"/>
<path d="M356 38.8H379.8M346.8 48.5V71.5M356 81H379.8" stroke="#585858" stroke-width="2.2"/>
<path d="M438 32H472L486 46V79L474 91.6H440L426 79V45Z" fill="#c6a3f0" stroke="#8e62c8" stroke-width="1.6"/>
<rect x="431" y="50" width="38" height="37" rx="6" fill="#a77ee6"/><path d="M469 52L485 47V79L473 90L469 86Z" fill="#8e62c8"/>
<path d="M427 66Q455 72 485 62M455 35V90" stroke="#8762b8" stroke-width="1.4" fill="none"/>
<polygon points="472.7,28.2 475.4,38.7 484.7,33.2 479.2,42.5 489.7,45.2 479.2,47.9 484.7,57.2 475.4,51.7 472.7,62.2 470,51.7 460.7,57.2 466.2,47.9 455.7,45.2 466.2,42.5 460.7,33.2 470,38.7" fill="#f5a300" stroke="#fff" stroke-width="1.6" stroke-linejoin="round"/>
<rect x="509.5" y="27" width="1.6" height="101" fill="#cfcfcf"/>
<path d="M548 91H536.6V40.1L548.2 28.4H558.6" fill="#d8d8d8" stroke="#585858" stroke-width="2"/>
<rect x="538" y="41" width="9.5" height="49" fill="#d8d8d8"/>
<polygon points="550.2,40.1 562,28.4 579.8,28.4 568.1,40.1" fill="#8ccbf8"/><rect x="550.2" y="40.1" width="17.9" height="51.5" fill="#6aaee4"/><polygon points="568.1,40.1 579.8,28.4 579.8,79.8 568.1,91.6" fill="#4a93cd"/>
<rect x="574" y="55" width="12" height="8" fill="#fff"/><path d="M576 58.9H587" stroke="#222" stroke-width="2.2"/><polygon points="586,54.1 593.8,58.9 586,63.8" fill="#222"/>
<path d="M620.4 91V43.5L635.7 28.4H654M668.8 91H620.4M668.8 91L683.3 76.5V53" fill="none" stroke="#585858" stroke-width="2"/>
<path d="M621.4 44H643Q668 46 669 70V90H621.4Z" fill="#d9d9d9"/><path d="M669 70L683 56V76L669 90Z" fill="#b3b3b3"/>
<path d="M643 41.3L656.5 28.4Q681 33 684 55.8L670 68.7Q667 45 643 41.3Z" fill="#6aaee4"/>
<polygon points="635.7,28.4 656,28.4 643,41.3 621,43.5" fill="#f4f4f4"/>
<polygon points="706.2,43.5 721.3,28.4 769.4,28.4 754.3,43.5" fill="#f4f4f4"/><rect x="706.2" y="43.5" width="48.1" height="47.5" fill="#d6d6d6"/><polygon points="754.3,43.5 769.4,28.4 769.4,76.5 754.3,91" fill="#b5b5b5"/>
<path d="M706.2 91V43.5L721.3 28.4H769.4V76.5L754.3 91Z" fill="none" stroke="#585858" stroke-width="2"/>
<rect x="711.8" y="49.6" width="36.4" height="36.4" fill="#f4f4f4"/><rect x="714" y="51.9" width="15.7" height="31.3" fill="#4a93cd"/><polygon points="714,83.2 729.7,68.1 746,68.1 746,83.8" fill="#8ccbf8"/>
<polygon points="812.2,36.2 820.3,28.2 856.1,28.2 848.2,36.2" fill="#8ccbf8"/><rect x="812.2" y="36.2" width="36" height="35.3" fill="#6aaee4"/><polygon points="848.2,36.2 856.1,28.2 856.1,64.2 848.2,71.5" fill="#4a93cd"/>
<polygon points="792.1,56 800,48.2 812.2,48.2 812.2,56" fill="#8ccbf8"/><rect x="792.1" y="56" width="36" height="35.6" fill="#6aaee4"/><polygon points="828.1,71.5 836,71.5 836,83.7 828.1,91.6" fill="#4a93cd"/>
<polygon points="882,40.1 894.1,28.2 937.7,28.2 926,40.1" fill="#8ccbf8"/><rect x="882" y="40.1" width="44" height="19.6" fill="#6aaee4"/><polygon points="926,40.1 937.7,28.2 937.7,46.8 926,58" fill="#4a93cd"/>
<path d="M878.2 65H926L941.6 49.3" fill="none" stroke="#0a84e0" stroke-width="2.2"/>
<path d="M883 70.3V89.4H926L937.7 78V61" fill="#d8d8d8" stroke="#585858" stroke-width="2"/><polygon points="926,70.3 937.7,61 937.7,78 926,89.4" fill="#b5b5b5"/>
<path d="M995.9 36V84M972 59.7H1020" stroke="#333" stroke-width="4.4"/>
<polygon points="985.8,43.5 995.9,28.4 1006,43.5" fill="#333"/><polygon points="985.8,76 995.9,91.6 1006,76" fill="#333"/><polygon points="980.5,49.5 964.6,59.7 980.5,69.8" fill="#333"/><polygon points="1011.5,49.5 1027.2,59.7 1011.5,69.8" fill="#333"/>
<rect x="1046.5" y="27" width="1.6" height="101" fill="#cfcfcf"/>
<path d="M1104.5 67.8V91H1151.9L1159.7 83.5V60.5H1136" fill="#d9d9d9" stroke="#585858" stroke-width="2"/><path d="M1128.6 67.8V91" stroke="#585858" stroke-width="2"/>
<polygon points="1151.9,67.8 1159.7,60.5 1159.7,83.5 1151.9,91" fill="#b5b5b5"/><polygon points="1128.6,67.8 1136,60.5 1159.7,60.5 1151.9,67.8" fill="#f4f4f4"/>
<polygon points="1104.5,44.1 1112.3,36.2 1135.9,36.2 1128.2,44.1" fill="#8ccbf8"/><rect x="1104.5" y="44.1" width="23.7" height="23.7" fill="#6aaee4"/><polygon points="1128.2,44.1 1135.9,36.2 1135.9,60 1128.2,67.8" fill="#4a93cd"/>
<polygon points="1151,30 1153.3,39.5 1161.6,34.4 1156.5,42.7 1166,45 1156.5,47.3 1161.6,55.6 1153.3,50.5 1151,60 1148.7,50.5 1140.4,55.6 1145.5,47.3 1136,45 1145.5,42.7 1140.4,34.4 1148.7,39.5" fill="#f5a300" stroke="#fff" stroke-width="1.6" stroke-linejoin="round"/>
<path d="M1195 48L1208 35.5Q1214 31 1220 35V54Q1217 58 1210 57V75L1197 86L1195 84Z" fill="#d0d0d0" stroke="#585858" stroke-width="2"/>
<path d="M1236 38L1250 50V86L1236 74Z" fill="#dadada" stroke="#585858" stroke-width="2"/><path d="M1224 52Q1230 48 1236 52V74Q1230 77 1224 73Z" fill="#c4c4c4" stroke="#585858" stroke-width="2"/>
<path d="M1213 58V67M1231 44V55" stroke="#0a84e0" stroke-width="1.8"/>
<rect x="1305.5" y="27" width="1.6" height="101" fill="#cfcfcf"/>
<path d="M1408 89.2H1392.6V46L1410.3 28.6H1424.9" fill="#d9d9d9" stroke="#585858" stroke-width="2"/><rect x="1394" y="47" width="14" height="41" fill="#d9d9d9"/>
<polygon points="1410,46 1427.7,28.6 1427.7,71.8 1410,89.2" fill="#5ac47e" stroke="#49a96a" stroke-width="0.8"/><polygon points="1434.2,46 1451.7,28.6 1451.7,71.8 1434.2,89.2" fill="#e39a64" stroke="#c8844f" stroke-width="0.8"/>
<rect x="1533.2" y="27" width="1.6" height="101" fill="#cfcfcf"/>
<path d="M1583 44V61.7M1637 44V61.7M1588 53H1632" stroke="#666" stroke-width="2"/><polygon points="1585,53 1592,48.5 1592,57.5" fill="#666"/><polygon points="1635,53 1628,48.5 1628,57.5" fill="#666"/>
<rect x="1582" y="64" width="56" height="11.7" fill="#f5a800" stroke="#e39400" stroke-width="0.8"/>
<path d="M1588 65V68M1594 65V70M1600 65V68M1606 65V70M1612 65V68M1618 65V70M1624 65V68M1630 65V70" stroke="#666" stroke-width="1.4"/>
<rect x="1682" y="27" width="1.6" height="101" fill="#cfcfcf"/>
<rect x="1742.9" y="30.9" width="56.2" height="56.2" fill="#85c8fb" stroke="#3a8ccc" stroke-width="1.6"/>
<path d="M1743.7 68Q1752 54 1759 54Q1765 54 1772 66Q1775 75 1779 70Q1785 62 1790 65L1798.3 76V86.3H1743.7Z" fill="#3f8fca"/>
<circle cx="1783.9" cy="46" r="6.3" fill="#fffdd0" stroke="#8fb8d8" stroke-width="0.8"/>
<rect x="1859" y="27" width="1.6" height="101" fill="#cfcfcf"/>
<rect x="1922" y="22.1" width="76" height="75.5" fill="#0a96d8"/>
<rect x="1929.3" y="29.4" width="53.5" height="41.8" fill="none" stroke="#22bb44" stroke-width="2" stroke-dasharray="5,4"/>
<path d="M1970.4 57.6V85.5L1976.5 79.5L1981 90.5L1986.5 88L1982.5 77.5H1991Z" fill="#fff" stroke="#222" stroke-width="1.6" stroke-linejoin="round"/>
<g font-family="Liberation Sans, sans-serif" font-size="23" fill="#333" stroke="#333" stroke-width="0.35">
<text x="170" y="124.5" textLength="113" lengthAdjust="spacingAndGlyphs">ERSTELLEN</text>
<text x="725" y="124.5" textLength="90" lengthAdjust="spacingAndGlyphs">ÄNDERN</text>
<text x="1077" y="124.5" textLength="192" lengthAdjust="spacingAndGlyphs">ZUSAMMENFüGEN</text>
<text x="1334" y="124.5" textLength="162" lengthAdjust="spacingAndGlyphs">KONSTRUIEREN</text>
<text x="1562" y="124.5" textLength="80" lengthAdjust="spacingAndGlyphs">PRüFEN</text>
<text x="1710" y="124.5" textLength="104" lengthAdjust="spacingAndGlyphs">EINFüGEN</text>
<text x="1888" y="124.5" textLength="129" lengthAdjust="spacingAndGlyphs">AUSWäHLE...</text>
</g>
<polygon points="289,111.5 300,111.5 294.5,119.5" fill="#3a3a3a"/>
<polygon points="821,111.5 832,111.5 826.5,119.5" fill="#3a3a3a"/>
<polygon points="1274,111.5 1285,111.5 1279.5,119.5" fill="#3a3a3a"/>
<polygon points="1501,111.5 1512,111.5 1506.5,119.5" fill="#3a3a3a"/>
<polygon points="1647,111.5 1658,111.5 1652.5,119.5" fill="#3a3a3a"/>
<polygon points="1819,111.5 1830,111.5 1824.5,119.5" fill="#3a3a3a"/>
<polygon points="2022,111.5 2033,111.5 2027.5,119.5" fill="#3a3a3a"/>
<rect x="-2" y="146.5" width="322.5" height="48" fill="#f2f2f2" stroke="#c9c9c9" stroke-width="1.4"/>
<rect x="280.5" y="163" width="17" height="16" rx="6" fill="#333"/><rect x="283.5" y="169.8" width="11" height="2.6" fill="#eee"/>
<rect x="312" y="160" width="1.6" height="22" fill="#555"/><rect x="316" y="163" width="1.2" height="16" fill="#888"/>
<g font-family="Liberation Sans, sans-serif" font-size="23" stroke-width="0.3">
<rect x="0" y="206.4" width="36" height="39.4" fill="#f2f2f2"/>
<text x="17.5" y="234" text-anchor="end" fill="#333" stroke="#333">er</text>
<rect x="0" y="254.4" width="88" height="39.4" fill="#f2f2f2"/>
<text x="65.7" y="282" text-anchor="end" fill="#333" stroke="#333">örper3</text>
<rect x="0" y="302.4" width="88" height="39.4" fill="#f2f2f2"/>
<text x="65.7" y="330" text-anchor="end" fill="#333" stroke="#333">örper5</text>
<rect x="0" y="350.4" width="88" height="39.4" fill="#f2f2f2"/>
<text x="65.7" y="378" text-anchor="end" fill="#333" stroke="#333">örper6</text>
<rect x="0" y="398.4" width="88" height="39.4" fill="#0696d7"/>
<text x="65.7" y="426" text-anchor="end" fill="#fff" stroke="#fff">örper7</text>
<rect x="0" y="446.4" width="68" height="39.4" fill="#f2f2f2"/>
<text x="48.2" y="474" text-anchor="end" fill="#333" stroke="#333">eber</text>
<rect x="0" y="494.4" width="52" height="39.4" fill="#f2f2f2"/>
<text x="26.3" y="522" text-anchor="end" fill="#333" stroke="#333" textLength="29.5" lengthAdjust="spacingAndGlyphs">zen</text>
<rect x="0" y="542.4" width="88" height="39.4" fill="#f2f2f2"/>
<text x="62.1" y="570" text-anchor="end" fill="#333" stroke="#333">kizze1</text>
<rect x="0" y="590.4" width="80.5" height="39.4" fill="#f2f2f2"/>
<text x="62.1" y="618" text-anchor="end" fill="#333" stroke="#333">kizze2</text>
<rect x="0" y="638.4" width="80.5" height="39.4" fill="#f2f2f2"/>
<text x="62.1" y="666" text-anchor="end" fill="#333" stroke="#333">kizze3</text>
<rect x="0" y="686.4" width="88" height="39.4" fill="#f2f2f2"/>
<text x="62.1" y="714" text-anchor="end" fill="#333" stroke="#333">kizze4</text>
<rect x="0" y="734.4" width="80.5" height="39.4" fill="#f2f2f2"/>
<text x="62.1" y="762" text-anchor="end" fill="#333" stroke="#333">kizze5</text>
<rect x="0" y="782.4" width="88" height="39.4" fill="#f2f2f2"/>
<text x="62.1" y="810" text-anchor="end" fill="#333" stroke="#333">kizze6</text>
<rect x="0" y="830.4" width="88" height="39.4" fill="#f2f2f2"/>
<text x="62.1" y="858" text-anchor="end" fill="#333" stroke="#333">kizze7</text>
<rect x="0" y="878.4" width="88" height="39.4" fill="#f2f2f2"/>
<text x="62.1" y="906" text-anchor="end" fill="#333" stroke="#333">kizze8</text>
<rect x="0" y="926.4" width="96" height="39.4" fill="#f2f2f2"/>
<text x="76.8" y="954" text-anchor="end" fill="#333" stroke="#333">kizze18</text>
<rect x="0" y="974.4" width="96" height="39.4" fill="#f2f2f2"/>
<text x="76.8" y="1002" text-anchor="end" fill="#333" stroke="#333">kizze19</text>
<rect x="0" y="1022.4" width="88" height="39.4" fill="#f2f2f2"/>
<text x="62.1" y="1050" text-anchor="end" fill="#333" stroke="#333">kizze9</text>
<rect x="0" y="1070.4" width="96" height="39.4" fill="#f2f2f2"/>
<text x="76.8" y="1098" text-anchor="end" fill="#333" stroke="#333">kizze10</text>
<rect x="0" y="1118.4" width="96" height="39.4" fill="#f2f2f2"/>
<text x="76.8" y="1146" text-anchor="end" fill="#333" stroke="#333">kizze11</text>
<rect x="0" y="1166.4" width="96" height="39.4" fill="#f2f2f2"/>
<text x="76.8" y="1194" text-anchor="end" fill="#333" stroke="#333">kizze12</text>
</g>
<rect x="-2" y="1226" width="320.5" height="40" fill="#f2f2f2" stroke="#c9c9c9" stroke-width="1.4"/>
<circle cx="289" cy="1249" r="8" fill="#333"/><path d="M284 1249H294M289 1244V1254" stroke="#eee" stroke-width="2.4"/>
<rect x="312" y="1238" width="1.6" height="20" fill="#555"/><rect x="316" y="1241" width="1.2" height="16" fill="#888"/>
<rect x="918.4" y="1224.2" width="473" height="40" fill="#f0f0f0"/>
<ellipse cx="940" cy="1248.5" rx="14" ry="5" fill="none" stroke="#333" stroke-width="1.8"/>
<path d="M937 1256V1242H933L940.2 1232L947.5 1242H943.5V1256" fill="#dfe3ea" stroke="#333" stroke-width="1.4"/>
<polygon points="928,1254 932,1249 933,1256" fill="#333"/>
<polygon points="966.5,1243.9 977.7,1243.9 972.1,1251.4" fill="#333"/>
<path d="M994 1256V1241L1003 1234V1238L1012 1236V1241" fill="#cfd3da" stroke="#444" stroke-width="1.2"/>
<rect x="992.5" y="1241" width="27" height="16" fill="#eef0f3" stroke="#444" stroke-width="1.2"/><rect x="996" y="1245" width="20" height="12" fill="#8a93a6"/>
<path d="M1047 1256Q1042 1248 1044 1246Q1048 1245 1052 1250V1236Q1052 1232 1055 1232Q1057 1232 1057 1236V1232Q1057 1228 1060 1231V1246V1233Q1060 1230 1063 1230Q1066 1232 1066 1236V1246V1237Q1067 1234 1070 1236Q1073 1238 1071 1246L1068 1256Z" fill="#f7f7f7" stroke="#333" stroke-width="1.3"/>
<circle cx="1105.8" cy="1242.4" r="10" fill="#e4eef0" stroke="#333" stroke-width="1.6"/><path d="M1112 1249L1120 1257" stroke="#333" stroke-width="3.2"/>
<path d="M1117 1236H1125M1121 1232V1240M1117 1242H1125" stroke="#333" stroke-width="1.3"/>
<rect x="1147" y="1233.3" width="29.4" height="26" fill="none" stroke="#666" stroke-width="1" stroke-dasharray="3,2"/>
<circle cx="1158.5" cy="1244" r="9.6" fill="#e4eef0" stroke="#333" stroke-width="1.6"/><path d="M1165 1250L1172 1257" stroke="#333" stroke-width="3.2"/>
<polygon points="1188.2,1243.8 1200,1243.8 1194.1,1251.4" fill="#333"/>
<rect x="1213.5" y="1232.2" width="29.2" height="26" rx="1.5" fill="#f8f8f8" stroke="#333" stroke-width="1.3"/><rect x="1216.5" y="1235.2" width="23" height="17" rx="1.5" fill="#97b8e0" stroke="#2c4a8a" stroke-width="1.4"/>
<polygon points="1248.1,1243.8 1259.9,1243.8 1254,1251.4" fill="#333"/>
<rect x="1275.5" y="1233.5" width="28" height="24" fill="#9aa0aa" stroke="#444" stroke-width="1.2"/>
<rect x="1277.3" y="1235.3" width="2.6" height="2.6" fill="#fff"/><rect x="1277.3" y="1239.1" width="2.6" height="2.6" fill="#fff"/><rect x="1277.3" y="1242.9" width="2.6" height="2.6" fill="#fff"/><rect x="1277.3" y="1246.7" width="2.6" height="2.6" fill="#fff"/><rect x="1277.3" y="1250.5" width="2.6" height="2.6" fill="#fff"/><rect x="1277.3" y="1254.3" width="2.6" height="2.6" fill="#fff"/><rect x="1281.1" y="1235.3" width="2.6" height="2.6" fill="#fff"/><rect x="1281.1" y="1239.1" width="2.6" height="2.6" fill="#fff"/><rect x="1281.1" y="1242.9" width="2.6" height="2.6" fill="#fff"/><rect x="1281.1" y="1246.7" width="2.6" height="2.6" fill="#fff"/><rect x="1281.1" y="1250.5" width="2.6" height="2.6" fill="#fff"/><rect x="1281.1" y="1254.3" width="2.6" height="2.6" fill="#fff"/><rect x="1284.9" y="1235.3" width="2.6" height="2.6" fill="#fff"/><rect x="1284.9" y="1239.1" width="2.6" height="2.6" fill="#fff"/><rect x="1284.9" y="1242.9" width="2.6" height="2.6" fill="#fff"/><rect x="1284.9" y="1246.7" width="2.6" height="2.6" fill="#fff"/><rect x="1284.9" y="1250.5" width="2.6" height="2.6" fill="#fff"/><rect x="1284.9" y="1254.3" width="2.6" height="2.6" fill="#fff"/><rect x="1288.7" y="1235.3" width="2.6" height="2.6" fill="#fff"/><rect x="1288.7" y="1239.1" width="2.6" height="2.6" fill="#fff"/><rect x="1288.7" y="1242.9" width="2.6" height="2.6" fill="#fff"/><rect x="1288.7" y="1246.7" width="2.6" height="2.6" fill="#fff"/><rect x="1288.7" y="1250.5" width="2.6" height="2.6" fill="#fff"/><rect x="1288.7" y="1254.3" width="2.6" height="2.6" fill="#fff"/><rect x="1292.5" y="1235.3" width="2.6" height="2.6" fill="#fff"/><rect x="1292.5" y="1239.1" width="2.6" height="2.6" fill="#fff"/><rect x="1292.5" y="1242.9" width="2.6" height="2.6" fill="#fff"/><rect x="1292.5" y="1246.7" width="2.6" height="2.6" fill="#fff"/><rect x="1292.5" y="1250.5" width="2.6" height="2.6" fill="#fff"/><rect x="1292.5" y="1254.3" width="2.6" height="2.6" fill="#fff"/><rect x="1296.3" y="1235.3" width="2.6" height="2.6" fill="#fff"/><rect x="1296.3" y="1239.1" width="2.6" height="2.6" fill="#fff"/><rect x="1296.3" y="1242.9" width="2.6" height="2.6" fill="#fff"/><rect x="1296.3" y="1246.7" width="2.6" height="2.6" fill="#fff"/><rect x="1296.3" y="1250.5" width="2.6" height="2.6" fill="#fff"/><rect x="1296.3" y="1254.3" width="2.6" height="2.6" fill="#fff"/><rect x="1300.1" y="1235.3" width="2.6" height="2.6" fill="#fff"/><rect x="1300.1" y="1239.1" width="2.6" height="2.6" fill="#fff"/><rect x="1300.1" y="1242.9" width="2.6" height="2.6" fill="#fff"/><rect x="1300.1" y="1246.7" width="2.6" height="2.6" fill="#fff"/><rect x="1300.1" y="1250.5" width="2.6" height="2.6" fill="#fff"/><rect x="1300.1" y="1254.3" width="2.6" height="2.6" fill="#fff"/>
<polygon points="1310.3,1243.8 1322.1,1243.8 1316.2,1251.4" fill="#333"/>
<rect x="1337.5" y="1235" width="28" height="24" fill="#2d4f8f"/>
<rect x="1339.5" y="1237" width="11" height="11" fill="#9ab9e0" stroke="#c9dcf0" stroke-width="0.8"/>
<rect x="1352.5" y="1237" width="11" height="11" fill="#9ab9e0" stroke="#c9dcf0" stroke-width="0.8"/>
<rect x="1339.5" y="1250" width="11" height="11" fill="#9ab9e0" stroke="#c9dcf0" stroke-width="0.8"/>
<rect x="1352.5" y="1250" width="11" height="11" fill="#9ab9e0" stroke="#c9dcf0" stroke-width="0.8"/>
<polygon points="1372.1,1243.8 1383.9,1243.8 1378,1251.4" fill="#333"/>
</svg>
</body></html>
